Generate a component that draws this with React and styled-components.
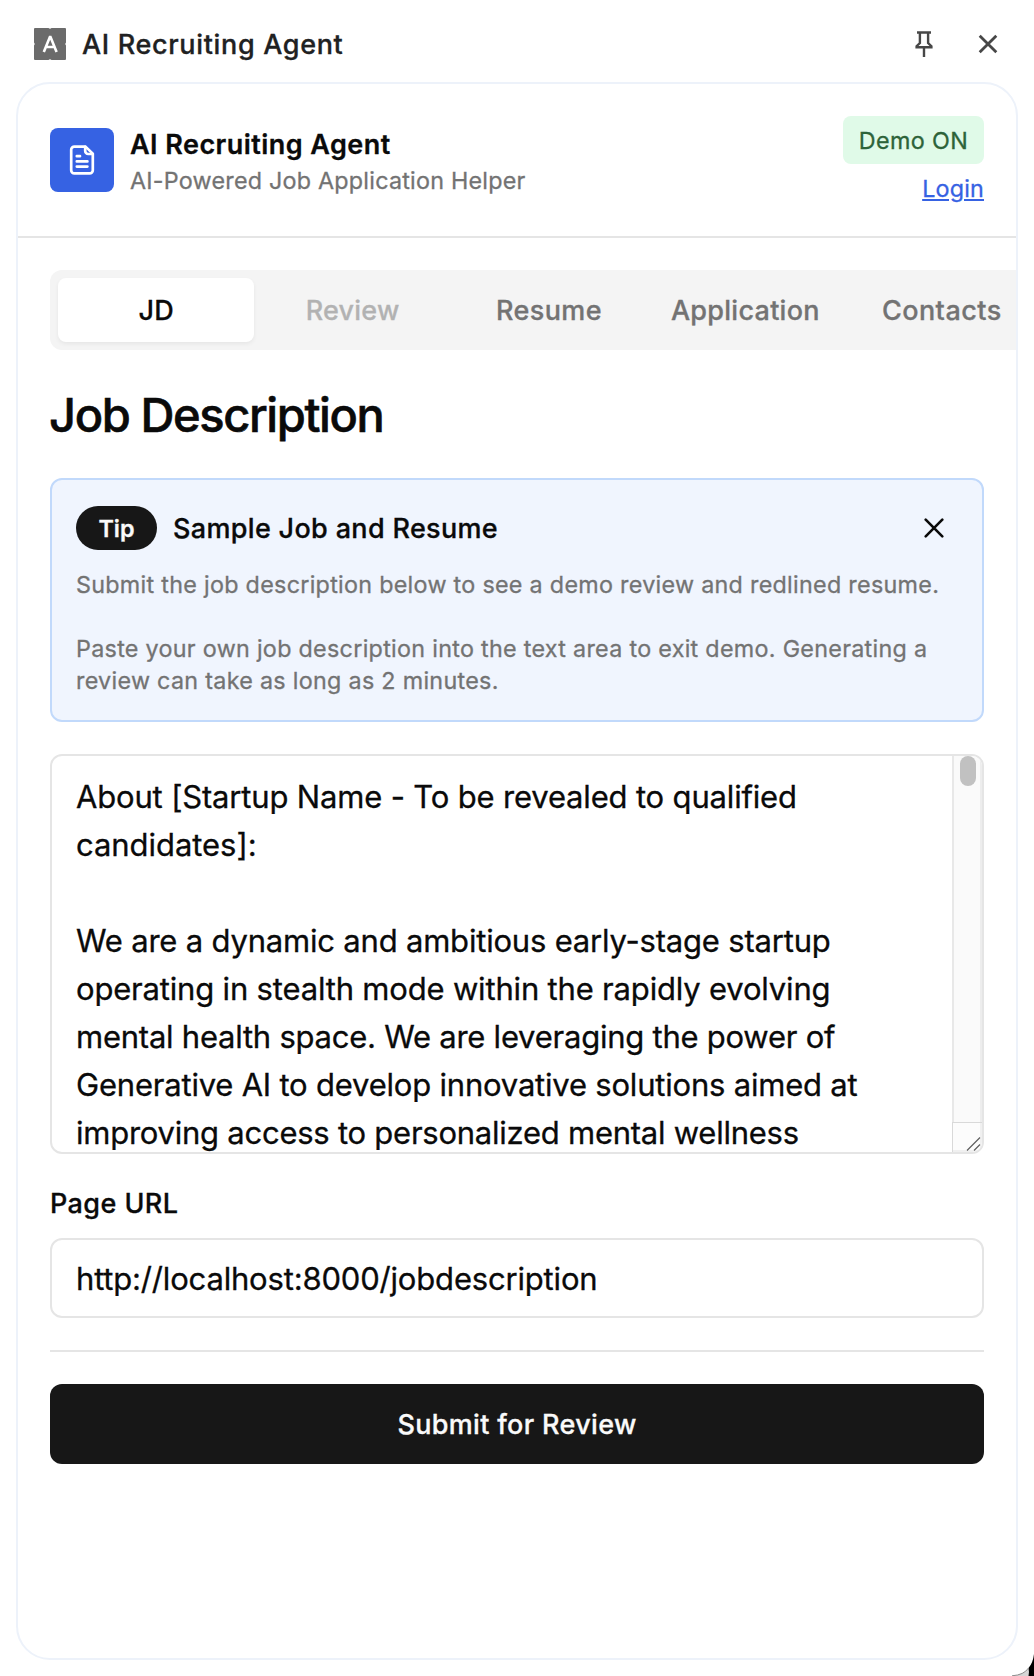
import React from "react";
import styled, { createGlobalStyle } from "styled-components";

const GlobalStyle = createGlobalStyle`
  *, *::before, *::after { box-sizing: border-box; }
  body {
    margin: 0;
    background: #ffffff;
    color: #0a0a0a;
    font-family: Inter, "Liberation Sans", sans-serif;
    -webkit-text-stroke: 0.3px currentColor;
  }
  h1, h2, h3, p { margin: 0; }
  button { font: inherit; border: 0; padding: 0; background: none; }
`;

const Window = styled.div`
  position: relative;
  display: flex;
  flex-direction: column;
  width: 1034px;
  height: 1676px;
  padding: 0 16px 16px;
  background: #ffffff;
  overflow: hidden;
`;

const TitleBar = styled.header`
  display: flex;
  align-items: center;
  flex: none;
  height: 82px;
  padding: 6px 10px 0 18px;
`;

const TitleText = styled.span`
  flex: 1;
  margin-left: 16px;
  padding-top: 2px;
  font-size: 27px;
  font-weight: 500;
  line-height: 40px;
  letter-spacing: 0.66px;
  color: #202122;
`;

const BarButton = styled.button`
  display: grid;
  place-items: center;
  width: 40px;
  height: 40px;
  margin-left: ${(p) => p.$gap || 0}px;
  color: #474747;
`;

const Panel = styled.main`
  display: flex;
  flex-direction: column;
  flex: 1;
  width: 1002px;
  border: 2px solid #edf2fa;
  border-radius: 34px;
  overflow: hidden;
`;

const PanelHeader = styled.div`
  display: flex;
  align-items: center;
  flex: none;
  height: 154px;
  padding: 0 32px;
  border-bottom: 2px solid #e5e5e5;
`;

const Logo = styled.div`
  display: grid;
  place-items: center;
  width: 64px;
  height: 64px;
  border-radius: 8px;
  background: #3662e3;
`;

const Brand = styled.div`
  flex: 1;
  margin-left: 16px;
  padding-top: 2px;
`;

const BrandName = styled.h1`
  font-size: 27px;
  font-weight: 600;
  line-height: 40px;
  letter-spacing: 0.45px;
`;

const Tagline = styled.p`
  font-size: 23.3px;
  line-height: 32px;
  letter-spacing: 0.24px;
  color: #737373;
`;

const Account = styled.div`
  display: flex;
  flex-direction: column;
  align-items: flex-end;
`;

const DemoBadge = styled.span`
  display: flex;
  justify-content: center;
  width: 141px;
  height: 48px;
  border-radius: 8px;
  background: #e0fae8;
  color: #2d6339;
  font-size: 23.3px;
  line-height: 49px;
  letter-spacing: 0.4px;
`;

const LoginLink = styled.a`
  height: 40px;
  font-size: 23.3px;
  line-height: 50px;
  letter-spacing: 0.2px;
  color: #3662e3;
  text-decoration: underline;
  text-decoration-thickness: 2px;
  text-underline-offset: 2px;
`;

const Content = styled.div`
  display: flex;
  flex-direction: column;
  padding: 32px;
`;

const TabList = styled.div`
  display: flex;
  width: 998px;
  height: 80px;
  padding: 8px;
  border-radius: 12px;
  background: #f4f4f4;
`;

const Tab = styled.button`
  flex: none;
  width: 196.4px;
  height: 64px;
  border-radius: 8px;
  font-size: 27px;
  font-weight: 500;
  letter-spacing: ${(p) => p.$tracking}px;
  color: ${(p) => (p.$active ? "#0a0a0a" : "#737373")};
  background: ${(p) => (p.$active ? "#ffffff" : "transparent")};
  box-shadow: ${(p) => (p.$active ? "0 2px 4px rgba(0, 0, 0, 0.06)" : "none")};
  opacity: ${(p) => (p.$disabled ? 0.5 : 1)};
`;

const Heading = styled.h2`
  margin: 33px 0 0 -1px;
  font-size: 47px;
  font-weight: 500;
  line-height: 64px;
  letter-spacing: -1.38px;
  -webkit-text-stroke-width: 0.6px;
`;

const TipCard = styled.section`
  height: 244px;
  margin-top: 31px;
  padding: 24px;
  border: 2px solid #c1d9fb;
  border-radius: 12px;
  background: #f0f5fe;
`;

const TipHeader = styled.div`
  display: flex;
  align-items: center;
  height: 48px;
  margin-bottom: 17px;
`;

const TipBadge = styled.span`
  width: 81px;
  height: 44px;
  border-radius: 22px;
  background: #171717;
  color: #fafafa;
  font-size: 23.3px;
  font-weight: 600;
  line-height: 46px;
  text-align: center;
`;

const TipTitle = styled.h3`
  flex: 1;
  margin-left: 16px;
  padding-top: 2px;
  font-size: 27px;
  font-weight: 500;
  line-height: 48px;
  letter-spacing: 0.33px;
`;

const DismissButton = styled.button`
  display: grid;
  place-items: center;
  width: 48px;
  height: 48px;
  color: #0a0a0a;
`;

const TipText = styled.p`
  margin-bottom: 32px;
  font-size: 23.3px;
  line-height: 32px;
  letter-spacing: ${(p) => p.$tracking}px;
  color: #737373;
`;

const TextArea = styled.div`
  display: flex;
  height: 400px;
  margin-top: 32px;
  border: 2px solid #e5e5e5;
  border-radius: 12px;
  overflow: hidden;
`;

const TextAreaBody = styled.div`
  flex: 1;
  padding: 17px 24px 0;
  font-size: 31px;
  line-height: 48px;
  white-space: pre;
`;

const TextLine = styled.div`
  height: 48px;
  letter-spacing: ${(p) => p.$tracking}px;
`;

const ScrollRail = styled.div`
  display: flex;
  flex-direction: column;
  width: 30px;
`;

const ScrollTrack = styled.div`
  flex: 1;
  padding-left: 6px;
  border-left: 2px solid #e8e8e8;
  border-right: 2px solid #ededed;
  background: #fafafa;
`;

const ScrollThumb = styled.div`
  width: 16px;
  height: 30px;
  border-radius: 8px;
  background: #c1c1c1;
`;

const ResizeCorner = styled.div`
  display: flex;
  align-items: flex-end;
  justify-content: flex-end;
  height: 30px;
  border-top: 1px solid #d9d9d9;
  border-left: 1px solid #d9d9d9;
  background: #fcfcfc;
  box-shadow: inset -2px -2px 0 #f0f0f0;
`;

const Label = styled.label`
  margin-top: 32px;
  font-size: 27px;
  font-weight: 500;
  line-height: 36px;
  letter-spacing: 0.41px;
`;

const UrlField = styled.div`
  height: 80px;
  margin-top: 16px;
  padding: 0 24px;
  border: 2px solid #e5e5e5;
  border-radius: 12px;
  font-size: 31px;
  line-height: 77px;
  letter-spacing: -0.18px;
`;

const Divider = styled.hr`
  width: 100%;
  height: 2px;
  margin: 32px 0;
  border: 0;
  background: #e5e5e5;
`;

const SubmitButton = styled.button`
  height: 80px;
  border-radius: 12px;
  background: #171717;
  color: #fafafa;
  font-size: 27px;
  font-weight: 500;
  letter-spacing: 0.33px;
`;

const WindowCorner = styled.svg`
  position: absolute;
  right: 0;
  bottom: 0;
`;

const tabs = [
  { label: "JD", tracking: 0.3, active: true },
  { label: "Review", tracking: 0.22, disabled: true },
  { label: "Resume", tracking: 0.42 },
  { label: "Application", tracking: 0.27 },
  { label: "Contacts", tracking: 0.46 },
];

const jobLines = [
  ["About [Startup Name - To be revealed to qualified", -0.17],
  ["candidates]:", -0.05],
  ["", 0],
  ["We are a dynamic and ambitious early-stage startup", -0.195],
  ["operating in stealth mode within the rapidly evolving", -0.18],
  ["mental health space. We are leveraging the power of", -0.24],
  ["Generative AI to develop innovative solutions aimed at", -0.205],
  ["improving access to personalized mental wellness", -0.245],
];

const AppIcon = () => (
  <svg width="32" height="32" viewBox="0 0 32 32">
    <path
      fill="#6b6b6b"
      d="M1 0H14.5Q16 1.6 17.5 0H31Q32 0 32 1V14.5Q30.4 16 32 17.5V31Q32 32 31 32H17.5Q16 30.4 14.5 32H1Q0 32 0 31V17.5Q1.6 16 0 14.5V1Q0 0 1 0Z"
    />
    <path
      d="M9.8 24L16.2 8.2L22.6 24M12.4 19H20"
      fill="none"
      stroke="#fff"
      strokeWidth="2.6"
      strokeLinejoin="bevel"
    />
  </svg>
);

const PinIcon = () => (
  <svg width="18" height="26" viewBox="0 0 18 26" fill="none" stroke="currentColor" strokeWidth="2.4">
    <path d="M2 1.5H16M4.9 1.5V12L1.6 15.2V16.2H16.4V15.2L13.1 12V1.5M9 16.5V26" />
  </svg>
);

const CrossIcon = ({ weight, cap }) => (
  <svg width="20" height="20" viewBox="0 0 20 20" fill="none" stroke="currentColor" strokeWidth={weight} strokeLinecap={cap}>
    <path d="M1.7 1.7L18.3 18.3M18.3 1.7L1.7 18.3" />
  </svg>
);

const DocumentIcon = () => (
  <svg width="32" height="32" viewBox="0 0 32 32" fill="none" stroke="#fff" strokeWidth="2.7" strokeLinecap="round" strokeLinejoin="round">
    <path d="M19.5 2.6H8.4A3.2 3.2 0 0 0 5.2 5.8V26.2A3.2 3.2 0 0 0 8.4 29.4H23.6A3.2 3.2 0 0 0 26.8 26.2V9.6Z" />
    <path d="M19.2 2.8V7A3 3 0 0 0 22.2 10H26.6" />
    <path d="M10.8 12.2H14M10.8 17.4H21.4M10.8 22.6H21.4" />
  </svg>
);

export default function App() {
  return (
    <Window>
      <GlobalStyle />
      <TitleBar>
        <AppIcon />
        <TitleText>AI Recruiting Agent</TitleText>
        <BarButton aria-label="Pin">
          <PinIcon />
        </BarButton>
        <BarButton $gap={24} aria-label="Close">
          <CrossIcon weight={2.8} cap="butt" />
        </BarButton>
      </TitleBar>
      <Panel>
        <PanelHeader>
          <Logo>
            <DocumentIcon />
          </Logo>
          <Brand>
            <BrandName>AI Recruiting Agent</BrandName>
            <Tagline>AI-Powered Job Application Helper</Tagline>
          </Brand>
          <Account>
            <DemoBadge>Demo ON</DemoBadge>
            <LoginLink>Login</LoginLink>
          </Account>
        </PanelHeader>
        <Content>
          <TabList>
            {tabs.map((t) => (
              <Tab key={t.label} $active={t.active} $disabled={t.disabled} $tracking={t.tracking}>
                {t.label}
              </Tab>
            ))}
          </TabList>
          <Heading>Job Description</Heading>
          <TipCard>
            <TipHeader>
              <TipBadge>Tip</TipBadge>
              <TipTitle>Sample Job and Resume</TipTitle>
              <DismissButton aria-label="Dismiss">
                <CrossIcon weight={2.6} cap="round" />
              </DismissButton>
            </TipHeader>
            <TipText $tracking={0.295}>
              Submit the job description below to see a demo review and redlined resume.
            </TipText>
            <TipText $tracking={0.3}>
              Paste your own job description into the text area to exit demo. Generating a
              <br />
              review can take as long as 2 minutes.
            </TipText>
          </TipCard>
          <TextArea>
            <TextAreaBody>
              {jobLines.map(([text, tracking], i) => (
                <TextLine key={i} $tracking={tracking}>
                  {text}
                </TextLine>
              ))}
            </TextAreaBody>
            <ScrollRail>
              <ScrollTrack>
                <ScrollThumb />
              </ScrollTrack>
              <ResizeCorner>
                <svg width="16" height="16" viewBox="0 0 16 16" stroke="#5f5f5f" strokeWidth="1.2">
                  <path d="M1 14.5L14 1.5M8 14.5L14 8.5" />
                </svg>
              </ResizeCorner>
            </ScrollRail>
          </TextArea>
          <Label>Page URL</Label>
          <UrlField>http://localhost:8000/jobdescription</UrlField>
          <Divider />
          <SubmitButton>Submit for Review</SubmitButton>
        </Content>
      </Panel>
      <WindowCorner width="24" height="24" viewBox="0 0 24 24">
        <path d="M24 2Q23 22 2 24H24Z" fill="#d6d6d6" />
        <path d="M24 2Q23 11 18.5 16Q19.5 20 18.5 24H24Z" fill="#000" />
        <path d="M2 23.8Q14 23 18.5 16" fill="none" stroke="#8a8a8a" />
      </WindowCorner>
    </Window>
  );
}
